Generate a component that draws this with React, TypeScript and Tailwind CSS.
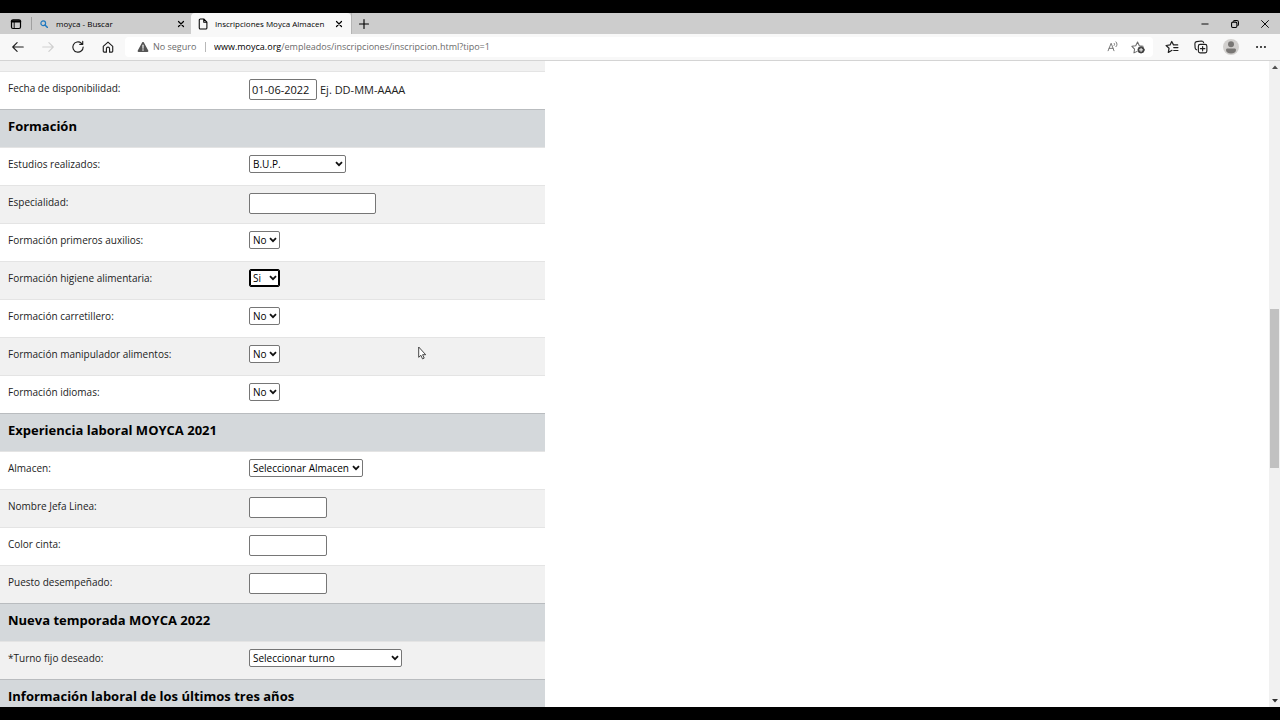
import type { ReactNode } from "react";

type Option = string;

type Row =
  | { kind: "heading"; text: string }
  | { kind: "text"; id: string; label: string; width: string; value?: string; hint?: string; shaded?: boolean }
  | { kind: "select"; id: string; label: string; width: string; options: Option[]; focused?: boolean; shaded?: boolean };

const rows: Row[] = [
  { kind: "text", id: "fecha", label: "Fecha de disponibilidad:", width: "w-[68px]", value: "01-06-2022", hint: "Ej. DD-MM-AAAA" },
  { kind: "heading", text: "Formación" },
  { kind: "select", id: "estudios", label: "Estudios realizados:", width: "w-[97px]", options: ["B.U.P."] },
  { kind: "text", id: "especialidad", label: "Especialidad:", width: "w-[127px]", shaded: true },
  { kind: "select", id: "auxilios", label: "Formación primeros auxilios:", width: "w-[31px]", options: ["No", "Si"] },
  { kind: "select", id: "higiene", label: "Formación higiene alimentaria:", width: "w-[31px]", options: ["Si", "No"], focused: true, shaded: true },
  { kind: "select", id: "carretillero", label: "Formación carretillero:", width: "w-[31px]", options: ["No", "Si"] },
  { kind: "select", id: "manipulador", label: "Formación manipulador alimentos:", width: "w-[31px]", options: ["No", "Si"], shaded: true },
  { kind: "select", id: "idiomas", label: "Formación idiomas:", width: "w-[31px]", options: ["No", "Si"] },
  { kind: "heading", text: "Experiencia laboral MOYCA 2021" },
  { kind: "select", id: "almacen", label: "Almacen:", width: "w-[114px]", options: ["Seleccionar Almacen"] },
  { kind: "text", id: "jefa", label: "Nombre Jefa Linea:", width: "w-[78px]", shaded: true },
  { kind: "text", id: "cinta", label: "Color cinta:", width: "w-[78px]" },
  { kind: "text", id: "puesto", label: "Puesto desempeñado:", width: "w-[78px]", shaded: true },
  { kind: "heading", text: "Nueva temporada MOYCA 2022" },
  { kind: "select", id: "turno", label: "*Turno fijo deseado:", width: "w-[153px]", options: ["Seleccionar turno"], shaded: true },
  { kind: "heading", text: "Información laboral de los últimos tres años" },
];

function Icon({ children, className }: { children: ReactNode; className: string }) {
  return (
    <svg viewBox="0 0 16 16" fill="none" stroke="currentColor" strokeLinecap="round" strokeLinejoin="round" className={className} aria-hidden="true">
      {children}
    </svg>
  );
}

function CloseIcon({ className }: { className: string }) {
  return (
    <Icon className={className}>
      <path d="M3 3l10 10M13 3L3 13" strokeWidth="2.4" />
    </Icon>
  );
}

function TabBar() {
  return (
    <div className="flex h-[21px] shrink-0 items-stretch bg-[#cdcdcd] text-[8px] text-black">
      <button type="button" aria-label="Acciones de pestaña" className="my-1 flex w-8 items-center justify-center border-r border-[#a0a0a0]">
        <Icon className="size-3">
          <rect x="2" y="2.5" width="12" height="11.5" rx="2" strokeWidth="1.6" />
          <path d="M2.5 4.5h11" strokeWidth="3" />
          <path d="M5.6 5v9" strokeWidth="1.2" />
        </Icon>
      </button>
      <div className="flex w-[159px] items-center pr-1 pl-2">
        <Icon className="size-2 shrink-0 text-[#1f78bf]">
          <circle cx="6.5" cy="6.5" r="4.7" strokeWidth="2.4" />
          <path d="M10.5 10.5l4.5 4.5" strokeWidth="3" />
        </Icon>
        <span className="ml-2 flex-1 truncate">moyca - Buscar</span>
        <button type="button" aria-label="Cerrar moyca - Buscar" className="flex size-3 items-center justify-center">
          <CloseIcon className="size-2" />
        </button>
      </div>
      <div className="flex w-[160px] items-center rounded-t-sm bg-[#f8f8f8] pr-1 pl-1.5">
        <Icon className="size-3 shrink-0">
          <path d="M3 2.8c0-.9.5-1.5 1.4-1.5H9l4.2 4.3v7.6c0 .9-.6 1.5-1.5 1.5H4.400c-.9 0-1.400-.6-1.400-1.500zM9 1.500v4.200h4" strokeWidth="1.4" />
        </Icon>
        <span className="ml-1.5 flex-1 whitespace-nowrap">Inscripciones Moyca Almacen</span>
        <button type="button" aria-label="Cerrar Inscripciones Moyca Almacen" className="mr-0.5 flex size-3 items-center justify-center">
          <CloseIcon className="size-2" />
        </button>
      </div>
      <button type="button" aria-label="Nueva pestaña" className="flex w-6 items-center justify-center border-l border-[#b5b5b5]">
        <Icon className="size-3">
          <path d="M8 2v12M2 8h12" strokeWidth="1.5" />
        </Icon>
      </button>
      <div className="ml-auto flex items-center gap-5 pr-2.5">
        <button type="button" aria-label="Minimizar">
          <Icon className="size-2.5">
            <path d="M3 8h10" strokeWidth="1.5" />
          </Icon>
        </button>
        <button type="button" aria-label="Restaurar">
          <Icon className="size-2.5">
            <rect x="2.5" y="5" width="8.5" height="8.5" rx="2" strokeWidth="1.7" />
            <path d="M5.5 3.5C6 2.8 6.5 2.5 7.5 2.5H11c1.7 0 2.5.8 2.5 2.5v3.500c0 1-.3 1.500-1 2" strokeWidth="1.7" />
          </Icon>
        </button>
        <button type="button" aria-label="Cerrar ventana">
          <Icon className="size-2.5">
            <path d="M2.5 2.5l11 11M13.5 2.5l-11 11" strokeWidth="1.5" />
          </Icon>
        </button>
      </div>
    </div>
  );
}

function Toolbar() {
  return (
    <div className="flex h-[27px] shrink-0 items-center border-b border-[#d4d4d4] bg-[#f8f8f8] text-[#1f1f1f]">
      <div className="flex w-[125px] shrink-0 items-center gap-4 pl-[11px]">
        <button type="button" aria-label="Atrás">
          <Icon className="size-3.5">
            <path d="M14 8H2.5M7 3L2 8l5 5" strokeWidth="1.3" />
          </Icon>
        </button>
        <button type="button" aria-label="Adelante" className="text-[#cfcfcf]">
          <Icon className="size-3.5">
            <path d="M2 8h11.5M9 3l5 5-5 5" strokeWidth="1.3" />
          </Icon>
        </button>
        <button type="button" aria-label="Actualizar">
          <Icon className="size-3.5">
            <path d="M13.9 8A5.9 5.9 0 1 1 11.8 3.500L13.400 5M13.400 1.600V5H10" strokeWidth="1.3" />
          </Icon>
        </button>
        <button type="button" aria-label="Inicio">
          <Icon className="size-3.5">
            <path d="M2.6 7.300L8 2.400l5.400 4.900v5.600c0 .6-.4 1-1 1H9.800V10c0-1.200-.7-1.800-1.800-1.800S6.200 8.800 6.200 10v3.900H3.600c-.6 0-1-.4-1-1z" strokeWidth="1.3" />
          </Icon>
        </button>
      </div>
      <div className="flex h-5 min-w-0 flex-1 items-center rounded-sm bg-white pr-2 pl-3 text-[9px] text-[#6b6b6b]">
        <svg viewBox="0 0 16 16" className="size-3 shrink-0" aria-hidden="true">
          <path d="M8 1.200c.5 0 .8.2 1 .6l6 11c.4.900 0 1.700-1 1.700H2c-1 0-1.400-.8-1-1.700l6-11c.2-.4.500-.6 1-.6z" fill="#555" />
          <path d="M8 5.500v4" stroke="#fff" strokeWidth="1.5" strokeLinecap="round" />
          <circle cx="8" cy="12" r="1" fill="#fff" />
        </svg>
        <span className="ml-1 w-[52px] shrink-0 whitespace-nowrap">No seguro</span>
        <span className="h-2.5 w-px shrink-0 bg-[#b8b8b8]" />
        <span className="ml-2 flex-1 truncate">
          <span className="text-black">www.moyca.org</span>/empleados/inscripciones/inscripcion.html?tipo=1
        </span>
        <button type="button" aria-label="Leer en voz alta" className="mr-3">
          <Icon className="size-3">
            <path d="M1.5 13L5.500 3l3.800 10M2.800 9.800h5.400M9.500 3c.9.8.9 2.200 0 3M12 1.200c1.800 1.800 1.800 4.600 0 6.400" strokeWidth="1.2" />
          </Icon>
        </button>
        <button type="button" aria-label="Agregar a favoritos">
          <Icon className="size-3.5">
            <path d="M7 13l-3.600 1.700.7-4.400L1 7.200l4.400-.7L7.500 2.300l2 4.200 4.300.7" strokeWidth="1.2" />
            <circle cx="11.5" cy="11.3" r="3.6" fill="#444" stroke="#444" />
            <path d="M11.5 9.500v3.600M9.700 11.300h3.600" stroke="#fff" strokeWidth="1.1" />
          </Icon>
        </button>
      </div>
      <div className="flex shrink-0 items-center gap-[15px] px-3">
        <button type="button" aria-label="Favoritos">
          <Icon className="size-3.5">
            <path d="M8 11.800l-4.200 2.400.8-4.700L1.300 6.300l4.500-.7L7.700 1.700l2 3.900h4.800M10 8.700h4.800M10 12h4.800" strokeWidth="1.4" />
          </Icon>
        </button>
        <button type="button" aria-label="Colecciones">
          <Icon className="size-3.5">
            <rect x="5" y="5" width="9.7" height="9.7" rx="2" strokeWidth="1.3" />
            <path d="M9.85 7.400v5M7.350 9.900h5M3 11.200c-1-.3-1.600-1-1.700-2L1 4.200c0-1.300.7-2.200 2-2.400L8.500 1.200c1.400 0 2.200.6 2.500 1.800" strokeWidth="1.3" />
          </Icon>
        </button>
        <button type="button" aria-label="Perfil">
          <svg viewBox="0 0 16 16" className="size-4" aria-hidden="true">
            <circle cx="8" cy="8" r="8" fill="#d2d0ce" />
            <circle cx="8" cy="5.3" r="3" fill="#797775" />
            <path d="M3 11c0-1 .6-1.500 1.500-1.500h7c.9 0 1.500.5 1.500 1.500 0 2-2 3.500-5 3.500S3 13 3 11z" fill="#797775" />
          </svg>
        </button>
        <button type="button" aria-label="Configuración y más">
          <svg viewBox="0 0 16 16" fill="currentColor" className="size-3.5" aria-hidden="true">
            <circle cx="3.500" cy="8" r="1.200" />
            <circle cx="8" cy="8" r="1.200" />
            <circle cx="12.500" cy="8" r="1.200" />
          </svg>
        </button>
      </div>
    </div>
  );
}

function FormRow({ row }: { row: Row }) {
  if (row.kind === "heading") {
    return (
      <tr className="h-[38px] border-t border-[#b9bcbf] bg-[#d4d8db]">
        <th colSpan={2} scope="colgroup" className="px-2 pt-2 text-left align-top text-[13px] leading-4 font-bold text-black">
          {row.text}
        </th>
      </tr>
    );
  }
  return (
    <tr className={row.shaded ? "h-[38px] border-t border-[#e4e4e4] bg-[#f1f1f1]" : "h-[38px] border-t border-[#e4e4e4] bg-white"}>
      <td className="px-2 pt-2 align-top leading-4">
        <label htmlFor={row.id}>{row.label}</label>
      </td>
      <td className="px-2 pt-[7px] align-top">
        {row.kind === "text" ? (
          <div className="flex items-center gap-[3px] text-[11px]">
            <input id={row.id} type="text" defaultValue={row.value} className={`${row.width} h-[21px] rounded-xs border border-[#767676] bg-white px-0.5 text-[#111]`} />
            {row.hint && <span className="leading-4">{row.hint}</span>}
          </div>
        ) : (
          <div className={`${row.width} relative`}>
            <select
              id={row.id}
              className={`block h-[18px] w-full appearance-none rounded-xs bg-white pl-[3px] leading-4 text-black outline-none ${
                row.focused ? "border border-black ring-1 ring-black ring-inset" : "border border-[#767676]"
              }`}
            >
              {row.options.map((option) => (
                <option key={option}>{option}</option>
              ))}
            </select>
            <svg viewBox="0 0 8 8" fill="none" stroke="#111" strokeWidth="1.8" className="pointer-events-none absolute top-[5px] right-[3px] size-2" aria-hidden="true">
              <path d="M1 2.200l3 3 3-3" />
            </svg>
          </div>
        )}
      </td>
    </tr>
  );
}

function Scrollbar() {
  return (
    <div className="flex w-[11px] shrink-0 flex-col items-center bg-[#f1f1f1] py-1">
      <svg viewBox="0 0 6 4" className="h-1 w-1.5 shrink-0" aria-hidden="true">
        <path d="M0 4l3-3.500L6 4z" fill="#505050" />
      </svg>
      <div className="flex-[240]" />
      <div className="w-[9px] flex-[159] bg-[#c1c1c1]" />
      <div className="flex-[231]" />
      <svg viewBox="0 0 6 4" className="h-1 w-1.5 shrink-0" aria-hidden="true">
        <path d="M0 0l3 3.500L6 0z" fill="#303030" />
      </svg>
    </div>
  );
}

export default function App() {
  return (
    <div className="flex h-screen flex-col overflow-hidden bg-black py-[13px] font-['Open_Sans','Noto_Sans',sans-serif]">
      <TabBar />
      <Toolbar />
      <div className="relative flex min-h-0 flex-1 bg-white">
        <main className="min-w-0 flex-1 overflow-hidden text-[10px] text-[#222]">
          <form className="w-[545px] max-w-full bg-[#f1f1f1] pt-[10px]">
            <table className="w-full table-fixed border-collapse">
              <colgroup>
                <col className="w-[241px]" />
                <col />
              </colgroup>
              <tbody>
                {rows.map((row) => (
                  <FormRow key={row.kind === "heading" ? row.text : row.id} row={row} />
                ))}
              </tbody>
            </table>
          </form>
        </main>
        <Scrollbar />
        <svg viewBox="0 0 9 14" className="pointer-events-none absolute top-[285px] left-[418px] h-3.5 w-[9px]" aria-hidden="true">
          <path d="M.7 1v10.300l2.200-2 1.600 3.600 1.700-.8-1.600-3.400h3.100z" fill="#fff" stroke="#333" strokeWidth=".9" strokeLinejoin="round" />
        </svg>
      </div>
    </div>
  );
}
